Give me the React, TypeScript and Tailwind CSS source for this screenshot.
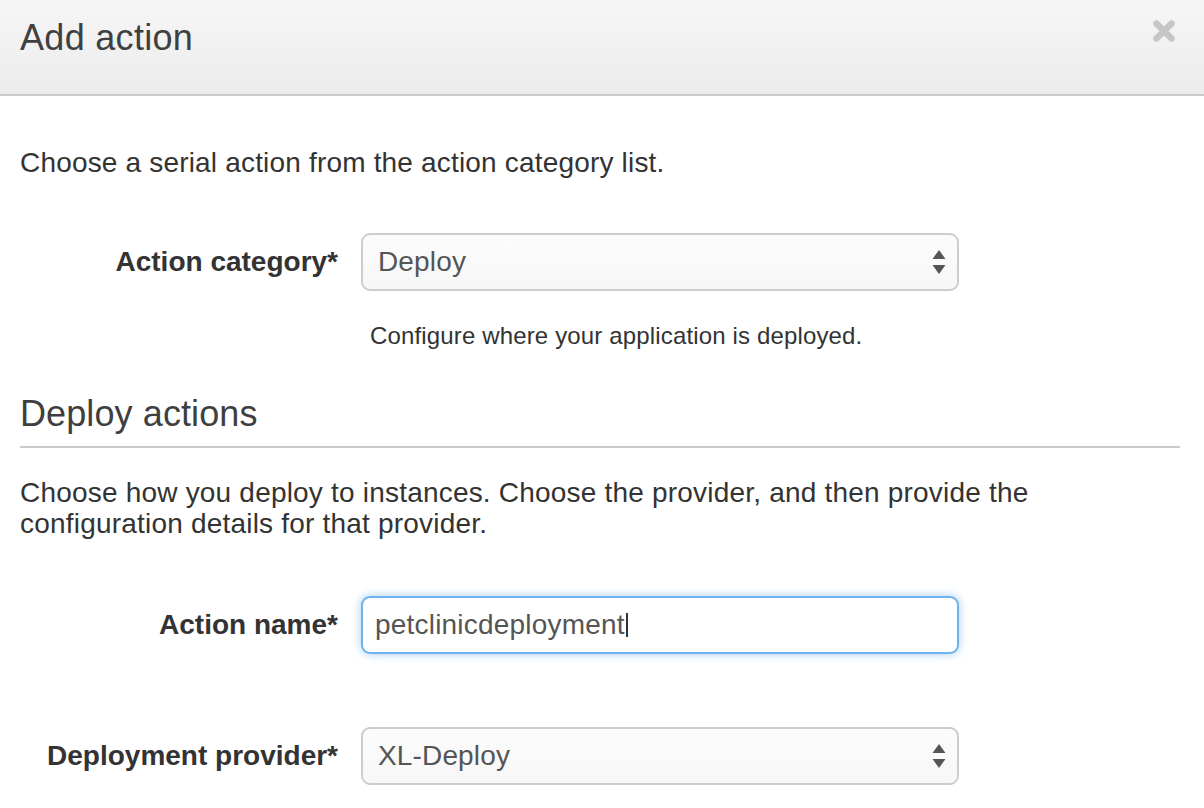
import React from "react";

const font = { fontFamily: '"Liberation Sans", Arial, Helvetica, sans-serif' };

function Arrows() {
  return (
    <svg width="14" height="26" viewBox="0 0 14 26" className="shrink-0">
      <path d="M7 1 L13.5 10 L0.5 10 Z" fill="#555" />
      <path d="M0.5 16 L13.5 16 L7 25 Z" fill="#555" />
    </svg>
  );
}

function CloseIcon() {
  return (
    <svg width="24" height="24" viewBox="0 0 24 24">
      <path d="M4.5 4.5 L19.5 19.5 M19.5 4.5 L4.5 19.5" stroke="#c6c6c6" strokeWidth="6.5" strokeLinecap="round" />
    </svg>
  );
}

function FakeSelect({ value }: { value: string }) {
  return (
    <div className="w-[598px] h-[58px] rounded-[9px] border-2 border-[#cdcdcd] bg-gradient-to-b from-[#fcfcfc] to-[#f7f7f7] flex items-center justify-between pl-[15px] pr-[11px]">
      <span className="text-[28px] leading-[32px] tracking-[0.15px] text-[#555]">{value}</span>
      <Arrows />
    </div>
  );
}

function Row({ label, children }: { label: string; children: React.ReactNode }) {
  return (
    <div className="flex items-center">
      <div className="w-[318px] text-right font-bold text-[28px] leading-[32px] text-[#333]">{label}</div>
      <div className="ml-[23px]">{children}</div>
    </div>
  );
}

export default function App() {
  return (
    <div style={font} className="w-[1204px] h-[808px] bg-white overflow-hidden text-[#333]">
      <div className="h-[96px] border-b-2 border-[#cbcbcb] bg-gradient-to-b from-[#f6f6f6] to-[#ececec] flex justify-between pl-[20px] pr-[28px]">
        <h4 className="pt-[18px] text-[36px] leading-[40px] tracking-[0.3px] text-[#3f3f3f]">Add action</h4>
        <div className="pt-[19px]">
          <CloseIcon />
        </div>
      </div>

      <div className="px-[20px]">
        <p className="mt-[51px] text-[28px] leading-[31px] tracking-[0.18px]">Choose a serial action from the action category list.</p>

        <div className="mt-[55px]">
          <Row label="Action category*">
            <FakeSelect value="Deploy" />
          </Row>
        </div>

        <p className="mt-[31px] ml-[350px] text-[24px] leading-[28px] tracking-[0.15px] text-[#333]">Configure where your application is deployed.</p>

        <h3 className="mt-[44px] text-[36px] leading-[40px] tracking-[0.1px] text-[#3f3f3f]">Deploy actions</h3>
        <div className="mt-[12px] w-[1160px] border-t-2 border-[#cacaca]" />

        <p className="mt-[29px] text-[28px] leading-[31px] tracking-[0.2px]">
          Choose how you deploy to instances. Choose the provider, and then provide the
          <br />
          configuration details for that provider.
        </p>

        <div className="mt-[57px]">
          <Row label="Action name*">
            <div className="w-[598px] h-[58px] rounded-[9px] border-2 border-[#6fb3ea] bg-white shadow-[0_0_10px_rgba(102,175,233,0.6)] flex items-center pl-[12px]">
              <span className="text-[28px] leading-[32px] tracking-[0.2px] text-[#555]">petclinicdeployment</span>
              <span className="w-[2px] h-[24px] bg-[#333] ml-[1px]" />
            </div>
          </Row>
        </div>

        <div className="mt-[73px]">
          <Row label="Deployment provider*">
            <FakeSelect value="XL-Deploy" />
          </Row>
        </div>
      </div>
    </div>
  );
}
